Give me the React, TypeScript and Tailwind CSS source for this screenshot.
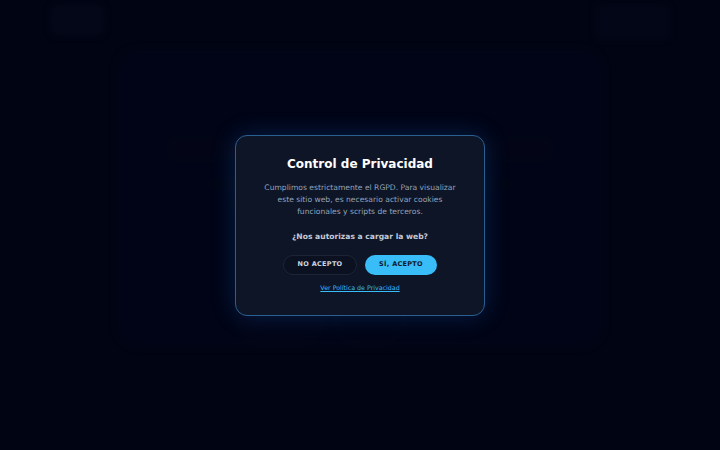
import React from "react";

// faint page behind the consent overlay
function BackgroundPage() {
  return (
    <div className="flex h-full w-full flex-col px-[50px] pt-[4px] opacity-60 blur-[3px]">
      {/* nav */}
      <div className="flex items-start justify-between">
        <div className="h-[32px] w-[55px] rounded-md bg-[#0a0f24]" />
        <div className="h-[36px] w-[75px] rounded-md border border-[#0d1330] bg-[#080c20]" />
      </div>

      {/* hero card */}
      <div className="mx-[65px] mt-[8px] flex h-[300px] flex-col items-center rounded-[24px] border border-[#0b1029] bg-[#040820] pt-[90px]">
        <div className="h-[20px] w-[380px] rounded bg-[#070b22]" />
        <div className="mt-[20px] h-[10px] w-[300px] rounded bg-[#060a1f]" />
        <div className="mt-[10px] h-[10px] w-[260px] rounded bg-[#060a1f]" />
      </div>

      {/* actions */}
      <div className="mt-[-50px] flex justify-center gap-[10px] pr-[80px]">
        <div className="h-[45px] w-[90px] rounded-full bg-[#070b24]" />
        <div className="h-[45px] w-[70px] rounded-full border border-[#0a0f28]" />
      </div>
    </div>
  );
}

export default function App() {
  return (
    <div className="relative h-[450px] w-full overflow-hidden bg-[#020514] font-['DejaVu_Sans',sans-serif]">
      <BackgroundPage />

      {/* Consent overlay */}
      <div className="absolute inset-0 flex items-center justify-center bg-[#01030f]/40">
        <div className="flex h-[181px] w-[250px] flex-col items-center rounded-[12px] border border-[#2a5f92] bg-[#0e1527] px-[24px] pt-[20px] text-center shadow-[0_0_24px_rgba(30,120,230,0.24)]">
          <h2 className="text-[12px] leading-[16px] font-bold text-white">
            Control de Privacidad
          </h2>

          <p className="mt-[10px] text-[7.6px] leading-[12px] text-[#94a3b8]">
            Cumplimos estrictamente el RGPD. Para visualizar este sitio web, es necesario activar cookies funcionales y scripts de terceros.
          </p>

          <p className="mt-[13px] text-[7.6px] leading-[12px] font-bold text-[#c3cad6]">
            ¿Nos autorizas a cargar la web?
          </p>

          <div className="mt-[12px] flex gap-[8px]">
            <button className="flex h-[20px] w-[74px] items-center justify-center rounded-full border border-[#1c2536] bg-[#0b1120] text-[6.5px] font-bold tracking-[0.3px] text-[#cbd5e1]">
              NO ACEPTO
            </button>
            <button className="flex h-[20px] w-[72px] items-center justify-center rounded-full bg-[#38bdf8] text-[6.5px] font-bold tracking-[0.3px] text-[#0f172a]">
              SÍ, ACEPTO
            </button>
          </div>

          <a className="mt-[9px] text-[6.3px] leading-[8px] text-[#38bdf8] underline">
            Ver Política de Privacidad
          </a>
        </div>
      </div>
    </div>
  );
}
